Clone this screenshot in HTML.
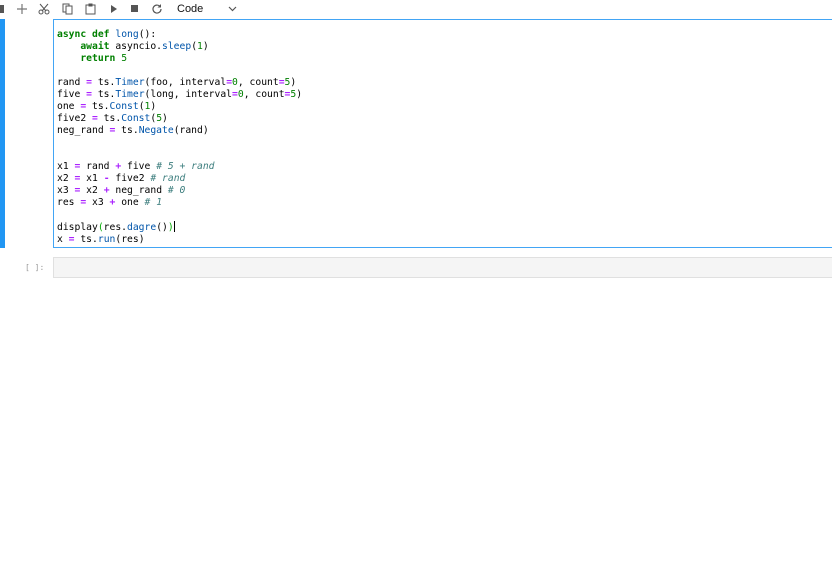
<!DOCTYPE html>
<html><head><meta charset="utf-8"><style>
html,body{margin:0;padding:0;background:#fff;width:832px;height:588px;overflow:hidden;position:relative;font-family:"Liberation Sans",sans-serif}
.tb{position:absolute;top:0;left:0;height:19px;width:832px}
.tb svg{position:absolute;top:3px}
.code{position:absolute;left:177px;top:3px;font-size:11px;color:#111}
.bar{position:absolute;left:0;top:19px;width:5px;height:229px;background:#2196f3}
.cell{position:absolute;left:53px;top:19px;border:1px solid #42a5f5;box-sizing:border-box;width:780px;height:229px}
pre{margin:0;position:absolute;left:57px;top:29px;font-family:"DejaVu Sans Mono","Liberation Mono",monospace;font-size:9.7px;line-height:12px;color:#000}
.k{color:#008000;font-weight:bold}.f{color:#0055aa}.o{color:#aa22ff;font-weight:bold}.n{color:#008000}.c{color:#408080;font-style:italic}.p{color:#0a0}
.cell2{position:absolute;left:53px;top:257px;width:790px;height:21px;background:#f5f5f5;border:1px solid #e0e0e0;box-sizing:border-box}
.pr{position:absolute;left:25px;top:263px;font-family:"DejaVu Sans Mono",monospace;font-size:8px;color:#999}
.cur{display:inline-block;width:1px;height:11px;background:#000;vertical-align:-2px}
</style></head><body>
<div class="tb">
<svg style="left:-3px" width="10" height="12"><rect x="0" y="2" width="7" height="8" fill="#555"/></svg>
<svg style="left:17px" width="10" height="12"><path d="M5 1v10M0 6h10" stroke="#777" stroke-width="1.2"/></svg>
<svg style="left:38px" width="12" height="12"><circle cx="3" cy="9" r="2" fill="none" stroke="#555"/><circle cx="9" cy="9" r="2" fill="none" stroke="#555"/><path d="M2 1l6 7M10 1L4 8" stroke="#555"/></svg>
<svg style="left:62px" width="11" height="12"><rect x="1" y="1" width="6" height="8" fill="none" stroke="#555"/><rect x="4" y="3" width="6" height="8" fill="#fff" stroke="#555"/></svg>
<svg style="left:85px" width="11" height="12"><rect x="1" y="2" width="9" height="9" fill="none" stroke="#555"/><rect x="3.5" y="0.5" width="4" height="3" fill="#555"/></svg>
<svg style="left:110px" width="8" height="12"><path d="M1 2l6 4-6 4z" fill="#555"/></svg>
<svg style="left:130px" width="9" height="12"><rect x="1" y="2" width="7" height="7" fill="#555"/></svg>
<svg style="left:152px" width="11" height="12"><path d="M9 6a4 4 0 1 1-1.2-2.8" fill="none" stroke="#555" stroke-width="1.2"/><path d="M9 1v3.5H5.5z" fill="#555"/></svg>
<div class="code">Code</div>
<svg style="left:228px" width="9" height="12"><path d="M1 4l3.5 3.5L8 4" fill="none" stroke="#555" stroke-width="1.2"/></svg>
</div>
<div class="bar"></div>
<div class="cell"></div>
<pre><span class="k">async</span> <span class="k">def</span> <span class="f">long</span>():
    <span class="k">await</span> asyncio.<span class="f">sleep</span>(<span class="n">1</span>)
    <span class="k">return</span> <span class="n">5</span>

rand <span class="o">=</span> ts.<span class="f">Timer</span>(foo, interval<span class="o">=</span><span class="n">0</span>, count<span class="o">=</span><span class="n">5</span>)
five <span class="o">=</span> ts.<span class="f">Timer</span>(long, interval<span class="o">=</span><span class="n">0</span>, count<span class="o">=</span><span class="n">5</span>)
one <span class="o">=</span> ts.<span class="f">Const</span>(<span class="n">1</span>)
five2 <span class="o">=</span> ts.<span class="f">Const</span>(<span class="n">5</span>)
neg_rand <span class="o">=</span> ts.<span class="f">Negate</span>(rand)


x1 <span class="o">=</span> rand <span class="o">+</span> five <span class="c"># 5 + rand</span>
x2 <span class="o">=</span> x1 <span class="o">-</span> five2 <span class="c"># rand</span>
x3 <span class="o">=</span> x2 <span class="o">+</span> neg_rand <span class="c"># 0</span>
res <span class="o">=</span> x3 <span class="o">+</span> one <span class="c"># 1</span>

display<span class="p">(</span>res.<span class="f">dagre</span>()<span class="p">)</span><span class="cur"></span>
x <span class="o">=</span> ts.<span class="f">run</span>(res)</pre>
<div class="pr">[ ]:</div>
<div class="cell2"></div>
</body></html>
